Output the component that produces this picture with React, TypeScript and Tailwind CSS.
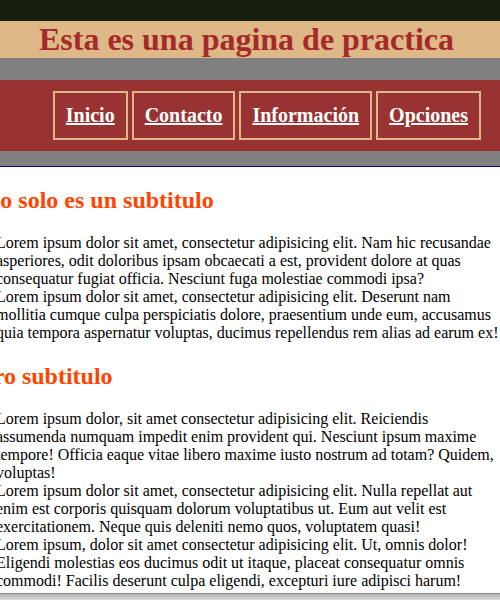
const navItems = ['Inicio', 'Contacto', 'Información', 'Opciones']

const serif = "font-['Liberation_Serif','Times_New_Roman',serif]"

export default function App() {
  return (
    <div className={`flex h-[600px] w-[500px] flex-col overflow-hidden bg-white text-black ${serif}`}>
      <div className="h-[21px] bg-[#161f0b]" />
      <header className="bg-[#deb887] pr-[7px]">
        <h1 className="text-center text-[32px] font-bold leading-[37px] text-[#a52a2a]">Esta es una pagina de practica</h1>
      </header>
      <div className="h-[22px] bg-[#808080]" />
      <nav className="flex h-[71px] items-center justify-end gap-1 bg-[#993333] pr-[19px]">
        {navItems.map((item) => (
          <a key={item} href="#" className="border-2 border-[#deb887] px-[11px] py-[11px] text-[20px] font-bold leading-[23px] text-white underline">
            {item}
          </a>
        ))}
      </nav>
      <div className="h-[15px] bg-[#808080]" />
      <div className="h-px bg-[#00008b]" />

      {/* page is scrolled a little to the right, so the left edge is clipped */}
      <main className="flex-1 overflow-hidden">
        <h2 className="mt-[19px] ml-[-33px] text-[24px] font-bold leading-[28px] text-[#ff4500]">Esto solo es un subtitulo</h2>
        <p className="mt-[20px] ml-[-4px] text-[16px] leading-[18px]">
          Lorem ipsum dolor sit amet, consectetur adipisicing elit. Nam hic recusandae asperiores, odit doloribus ipsam obcaecati a est, provident dolore at quas consequatur fugiat officia. Nesciunt fuga molestiae commodi ipsa?
          <br />
          Lorem ipsum dolor sit amet, consectetur adipisicing elit. Deserunt nam mollitia cumque culpa perspiciatis dolore, praesentium unde eum, accusamus quia tempora aspernatur voluptas, ducimus repellendus rem alias ad earum ex!
        </p>

        <h2 className="mt-[20px] ml-[-33px] text-[24px] font-bold leading-[28px] text-[#ff4500]">Otro subtitulo</h2>
        <p className="mt-[20px] ml-[-4px] text-[16px] leading-[18px]">
          Lorem ipsum dolor, sit amet consectetur adipisicing elit. Reiciendis assumenda numquam impedit enim provident qui. Nesciunt ipsum maxime tempore! Officia eaque vitae libero maxime iusto nostrum ad totam? Quidem, voluptas!
          <br />
          Lorem ipsum dolor sit amet, consectetur adipisicing elit. Nulla repellat aut enim est corporis quisquam dolorum voluptatibus ut. Eum aut velit est exercitationem. Neque quis deleniti nemo quos, voluptatem quasi!
          <br />
          Lorem ipsum, dolor sit amet consectetur adipisicing elit. Ut, omnis dolor! Eligendi molestias eos ducimus odit ut itaque, placeat consequatur omnis commodi! Facilis deserunt culpa eligendi, excepturi iure adipisci harum!
        </p>
      </main>

      <div className="h-[7px] border-t border-[#8a8a8a] bg-gradient-to-b from-[#b4b4b4] to-[#dcdcdc]" />
    </div>
  )
}
